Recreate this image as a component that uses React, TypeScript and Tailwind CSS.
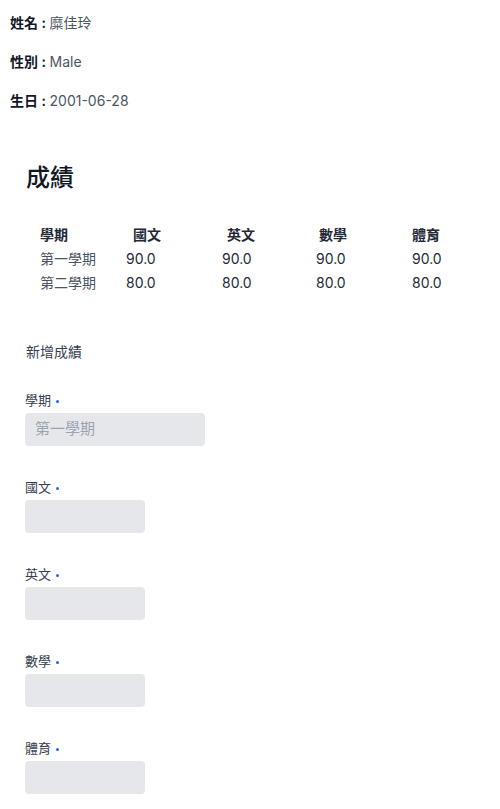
import React from "react";

const font = { fontFamily: 'Inter, "Noto Sans CJK TC", sans-serif' };

const info = [
  ["姓名", "糜佳玲"],
  ["性別", "Male"],
  ["生日", "2001-06-28"],
];

const rows = [
  ["第一學期", "90.0", "90.0", "90.0", "90.0"],
  ["第二學期", "80.0", "80.0", "80.0", "80.0"],
];

function Field({ label, wide, placeholder }: { label: string; wide?: boolean; placeholder?: string }) {
  return (
    <div className="flex flex-col">
      <div className="flex items-center h-[18px] leading-[18px] text-[13px] text-[#374151]">
        <span>{label}</span>
        <span className="ml-[5px] mt-[2px] inline-block w-[3px] h-[3px] rounded-full bg-[#2563eb]" />
      </div>
      <div
        className={`mt-[4px] h-[33px] rounded-[4px] bg-[#e5e7eb] flex items-center pl-[10px] text-[15px] text-[#9ca3af] ${
          wide ? "w-[180px]" : "w-[120px]"
        }`}
      >
        {placeholder}
      </div>
    </div>
  );
}

export default function App() {
  return (
    <div className="bg-white min-h-[809px] text-[#1f2937]" style={font}>
      <div className="flex flex-col gap-[19px] pt-[13px] pl-[10px]">
        {info.map(([k, v]) => (
          <div key={k} className="h-[20px] leading-[20px] text-[14px]">
            <span className="font-semibold text-[#111827]">{k} : </span>
            <span className="text-[#4b5563]">{v}</span>
          </div>
        ))}
      </div>

      <h2 className="mt-[51px] pl-[26px] text-[24px] leading-[32px] font-medium text-[#111827]">成績</h2>

      <div className="mt-[29px] pl-[40px] text-[14px]">
        <div className="grid grid-cols-[86px_96px_94px_96px_60px] h-[24px] leading-[24px] font-semibold text-[#1f2937]">
          <div>學期</div>
          <div className="pl-[7px]">國文</div>
          <div className="pl-[5px]">英文</div>
          <div className="pl-[3px]">數學</div>
          <div>體育</div>
        </div>
        {rows.map((r) => (
          <div key={r[0]} className="grid grid-cols-[86px_96px_94px_96px_60px] h-[24px] leading-[24px]">
            <div className="text-[#4b5563]">{r[0]}</div>
            {r.slice(1).map((c, i) => (
              <div key={i} className="text-[#1f2937]">
                {c}
              </div>
            ))}
          </div>
        ))}
      </div>

      <div className="mt-[47px] pl-[25px]">
        <div className="h-[20px] leading-[20px] text-[14px] text-[#374151] pl-[1px]">新增成績</div>
        <div className="mt-[29px] flex flex-col gap-[32px]">
          <Field label="學期" wide placeholder="第一學期" />
          <Field label="國文" />
          <Field label="英文" />
          <Field label="數學" />
          <Field label="體育" />
        </div>
      </div>
    </div>
  );
}
